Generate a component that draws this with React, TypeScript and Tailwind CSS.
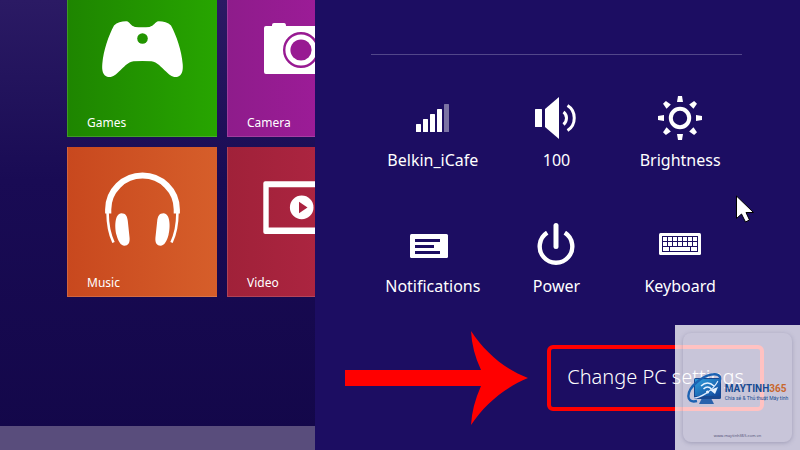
import type { ReactNode } from 'react'

const NAVY = '#1c0d62'

function GamesIcon() {
  return (
    <svg viewBox="0 16 150 110" className="h-[110px] w-[150px] shrink-0" aria-hidden="true">
      <path
        fill="#fff"
        d="M47 38.5C50 35.5 55 34.2 59.5 34.3C63 34.8 63.5 39 68 39.9Q75.5 40.6 82.5 39.9C87 39 88 34.8 91.5 34.3C96 34.2 101 35.5 104 38.5C109.500 49 114.500 63 115.700 77C116.200 83 115.500 88.500 110 90C105.500 90.800 102 87.500 99 84.500C94.500 80.500 90 75 84.500 74.300Q75.500 73.600 66.500 74.300C61 75 56.500 80.500 52 84.500C49 87.500 45.500 90.800 41 90C35.500 88.500 34.800 83 35.300 77C36.500 63 41.500 49 47 38.500Z"
      />
      <circle cx="75.500" cy="51.500" r="5.300" fill="#229400" />
    </svg>
  )
}

function CameraIcon() {
  return (
    <svg viewBox="0 16 150 110" className="h-[110px] w-[150px] shrink-0" aria-hidden="true">
      <path fill="#fff" d="M39 39H45V38Q45 36 47 36H57Q59 36 59 39H109Q111 39 111 41V85Q111 87 109 87H39Q37 87 37 85V41Q37 39 39 39Z" />
      <circle cx="74" cy="63" r="16.800" fill="none" stroke="#981a92" strokeWidth="2.400" />
      <circle cx="74" cy="63" r="10.600" fill="#981a92" />
    </svg>
  )
}

function MusicIcon() {
  return (
    <svg viewBox="0 16 150 110" className="h-[110px] w-[150px] shrink-0" aria-hidden="true">
      <g fill="none" stroke="#fff">
        <path strokeWidth="6.200" d="M41.200 66.500V62.500A34.300 34 0 0 1 109.800 62.500V66.500" />
        <path strokeWidth="2.600" d="M40.600 66C40.600 77 42.500 87 46.500 95.500M110.400 66C110.400 77 108.500 87 104.500 95.500" />
      </g>
      <path fill="#fff" d="M54.500 66.300C58.500 66.300 60.200 69 60.800 74L62.600 91C63 96 61 98.700 57.500 98.700C53.500 98.700 51.200 94 49.500 88C47.500 81 47.500 66.300 54.500 66.300Z" />
      <path fill="#fff" d="M96.500 66.300C92.500 66.300 90.800 69 90.200 74L88.400 91C88 96 90 98.700 93.500 98.700C97.500 98.700 99.800 94 101.500 88C103.500 81 103.500 66.300 96.500 66.300Z" />
    </svg>
  )
}

function VideoIcon() {
  return (
    <svg viewBox="0 16 150 110" className="h-[110px] w-[150px] shrink-0" aria-hidden="true">
      <path fill="#fff" fillRule="evenodd" d="M38.300 34.300H111Q113 34.300 113 36.300V85Q113 87 111 87H38.300Q36.300 87 36.300 85V36.300Q36.300 34.300 38.300 34.300ZM41.700 40.300V80.500H107.600V40.300Z" />
      <circle cx="74.700" cy="60.400" r="11.800" fill="#fff" />
      <path fill="#aa233f" d="M72 54.800L80.500 60.400L72 66.200Z" />
    </svg>
  )
}

const tiles = [
  { name: 'Games', icon: <GamesIcon />, color: 'from-[#1e8500] to-[#27a500]' },
  { name: 'Camera', icon: <CameraIcon />, color: 'from-[#8e1c8b] to-[#a51b9f]' },
  { name: 'Music', icon: <MusicIcon />, color: 'from-[#c8481e] to-[#d65e2a]' },
  { name: 'Video', icon: <VideoIcon />, color: 'from-[#a02139] to-[#b32745]' },
]

function SignalIcon() {
  return (
    <svg width="33" height="28" viewBox="0 0 33 28" fill="#fff" aria-hidden="true">
      <rect x="0" y="20" width="5" height="8" rx=".5" />
      <rect x="7" y="15" width="5" height="13" rx=".5" />
      <rect x="14" y="10" width="5" height="18" rx=".5" />
      <rect x="21" y="5" width="5" height="23" rx=".5" />
      <rect x="28" y="0" width="5" height="28" rx=".5" opacity=".42" />
    </svg>
  )
}

function VolumeIcon() {
  return (
    <svg width="42" height="42" viewBox="0 0 42 42" fill="#fff" aria-hidden="true">
      <rect x="0" y="12" width="7" height="18" rx=".5" />
      <path d="M10 12L24 0V42L10 30Z" />
      <path fill="none" stroke="#fff" strokeWidth="3" d="M28.500 15C32.500 18 32.500 24 28.500 27.500M32.500 8.500C41.500 14 41.500 28 32.500 33.500" />
    </svg>
  )
}

function BrightnessIcon() {
  return (
    <svg width="44" height="44" viewBox="-22 -22 44 44" fill="#fff" aria-hidden="true">
      <circle r="9.200" fill="none" stroke="#fff" strokeWidth="4" />
      {[0, 45, 90, 135, 180, 225, 270, 315].map((angle) => (
        <path key={angle} d="M-3 -16L-2 -22H2L3 -16Z" transform={`rotate(${angle})`} />
      ))}
    </svg>
  )
}

function NotificationsIcon() {
  return (
    <svg width="46" height="28" viewBox="0 0 46 28" aria-hidden="true">
      <rect y="4" width="38" height="24" rx="1.500" fill="#fff" />
      <path fill={NAVY} d="M5 9H30V12H5ZM5 15H24V18H5ZM5 21H30V24H5Z" />
    </svg>
  )
}

function PowerIcon() {
  return (
    <svg width="38" height="42" viewBox="0 0 38 42" fill="none" stroke="#fff" aria-hidden="true">
      <path strokeWidth="4.400" d="M10.200 9.700A16.300 16.300 0 1 0 27.800 9.700" />
      <path strokeWidth="5" strokeLinecap="round" d="M19 2.500V23.500" />
    </svg>
  )
}

function KeyboardIcon() {
  return (
    <svg width="42" height="22" viewBox="0 0 42 22" fill="#fff" aria-hidden="true">
      <rect width="42" height="22" rx="1.500" />
      <rect x="3" y="3" width="36" height="16" fill={NAVY} />
      {[0, 1].map((row) =>
        [0, 1, 2, 3, 4, 5, 6].map((col) => (
          <rect key={`${row}-${col}`} x={4 + col * 5} y={4 + row * 5} width="4" height="4" />
        )),
      )}
      <path d="M4 14H10V18H4ZM11 14H31V18H11ZM32 14H38V18H32Z" />
    </svg>
  )
}

function QuickSetting({ label, children }: { label: string; children: ReactNode }) {
  return (
    <button type="button" className="flex flex-col items-center gap-1.5">
      <span className="flex h-12 items-center">{children}</span>
      <span className="text-base leading-6 whitespace-nowrap">{label}</span>
    </button>
  )
}

function Watermark() {
  return (
    <aside className="absolute right-0 bottom-0 h-[125px] w-[125px] bg-white/76 p-2">
      <div className="flex h-full flex-col items-center justify-between rounded-lg pt-9 pb-1 shadow-[0_1px_4px_#64648866]">
        <div className="flex items-center gap-0.5 pt-1">
          <svg width="36" height="34" viewBox="0 0 36 34" className="shrink-0" aria-hidden="true">
            <defs>
              <linearGradient id="screen" x1="0" y1="0" x2="1" y2="1">
                <stop offset="0" stopColor="#2f9fdc" />
                <stop offset="1" stopColor="#0f4499" />
              </linearGradient>
            </defs>
            <path fill="#2a62ac" d="M15 25H24L27 31H12Z" />
            <rect x="7" y="5" width="27" height="21" rx="1.500" fill="#174790" />
            <rect x="8" y="6" width="25" height="17" fill="url(#screen)" />
            <path fill="none" stroke="#e4f1ff" strokeWidth="1.500" d="M14 13Q20.500 7 27 13M16.500 16Q20.500 12 24.500 16" />
            <circle cx="20.500" cy="19" r="1.500" fill="#fff" />
            <path fill="none" stroke="#dceaff" strokeWidth="1.200" d="M7 25C12 25 25 19 31 8" />
            <path fill="none" stroke="#1c62b2" strokeWidth="2.400" d="M10 28C-2 31 -1 18 10 9C19 1 31 -1 33 4C34 9 30 16 23 21" />
            <path fill="#e4f1ff" d="M23 17L31 14L28 21Z" />
          </svg>
          <div className="pt-1 font-['Roboto',sans-serif] text-[#164a91]">
            <p className="text-[10px] leading-3 font-bold">
              MAYTINH<span className="text-[#c8672d]">365</span>
            </p>
            <p className="text-[5px] leading-1.5 whitespace-nowrap">Chia sẻ &amp; Thủ thuật Máy tính</p>
          </div>
        </div>
        <p className="text-[4px] leading-1 text-[#56567a]">www.maytinh365.com.vn</p>
      </div>
    </aside>
  )
}

export default function App() {
  return (
    <div className="relative flex min-h-screen overflow-hidden bg-[#14084d] font-['Noto_Sans','Open_Sans',sans-serif] text-white">
      <main className="flex min-w-0 flex-1 flex-col justify-between overflow-hidden bg-linear-to-b from-[#2b1a64] via-[#190b54] via-40% to-[#130749]">
        <div className="grid grid-cols-[150px_150px] grid-rows-[137px_150px] gap-2.5 pl-[67px]">
          {tiles.map((tile) => (
            <a
              key={tile.name}
              href={`#${tile.name.toLowerCase()}`}
              className={`flex flex-col justify-end overflow-hidden bg-linear-to-r pb-1 shadow-[inset_1px_-1px_0_#ffffff26] ${tile.color}`}
            >
              {tile.icon}
              <span className="pl-5 text-xs leading-5">{tile.name}</span>
            </a>
          ))}
        </div>
        <div className="h-6 bg-[#594d7c]" />
      </main>

      <section className="relative w-[485px] shrink-0 bg-[#1c0d62]">
        <div className="pt-[54px] pr-[58px] pl-14">
          <hr className="border-[#52478a]" />
          <div className="grid grid-cols-3 gap-y-12 pt-[39px]">
            <QuickSetting label="Belkin_iCafe"><SignalIcon /></QuickSetting>
            <QuickSetting label="100"><VolumeIcon /></QuickSetting>
            <QuickSetting label="Brightness"><BrightnessIcon /></QuickSetting>
            <QuickSetting label="Notifications"><NotificationsIcon /></QuickSetting>
            <QuickSetting label="Power"><PowerIcon /></QuickSetting>
            <QuickSetting label="Keyboard"><KeyboardIcon /></QuickSetting>
          </div>
        </div>

        <div className="flex items-center justify-end gap-[19px] pt-8 pr-9">
          <svg width="183" height="95" viewBox="0 0 183 95" className="shrink-0" aria-hidden="true">
            <path fill="#f00" d="M0 40H136Q127 21 126 1C140 22 159 39 183 48C159 58 140 74 126 95Q127 76 136 56H0Z" />
          </svg>
          <button type="button" className="h-[66px] w-[217px] rounded-md border-4 border-[#f00] pb-0.5 text-xl leading-6 font-light whitespace-nowrap">
            Change PC settings
          </button>
        </div>

        {/* pointer */}
        <svg width="20" height="28" viewBox="0 0 20 28" className="absolute top-[195px] right-[45px]" aria-hidden="true">
          <path fill="#fff" stroke="#000" strokeWidth="1" d="M1.500 1V23.500L6.500 19L10.500 27L14.500 25L11 17.500H18.500Z" />
        </svg>
      </section>

      <Watermark />
    </div>
  )
}
